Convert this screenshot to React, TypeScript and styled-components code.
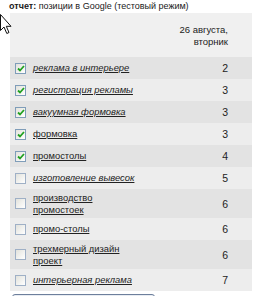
import React from "react";
import styled, { createGlobalStyle } from "styled-components";

const GlobalStyle = createGlobalStyle`
  html, body {
    margin: 0;
    padding: 0;
    background: #ffffff;
  }
  body {
    font-family: "Liberation Sans", Arial, sans-serif;
    font-size: 10px;
    color: #222222;
  }
`;

const Page = styled.div`
  position: relative;
  width: 261px;
  height: 296px;
  overflow: hidden;
  background: #ffffff;
`;

const Title = styled.div`
  height: 13px;
  line-height: 13px;
  padding-left: 9px;
  font-size: 9px;
  color: #1a1a1a;
  white-space: nowrap;

  b {
    font-weight: bold;
  }
`;

const Panel = styled.div`
  margin-left: 10px;
  width: 242px;
  background: #f0f0f0;
`;

const HeadCell = styled.div`
  padding: 11px 24px 9px 0;
  text-align: right;
  line-height: 12px;
  height: 24px;
  font-size: 9.5px;
`;

const Row = styled.div<{ dark: boolean }>`
  display: grid;
  grid-template-columns: 23px 106px 1fr;
  align-items: center;
  min-height: 22px;
  padding: 2.5px 0;
  box-sizing: border-box;
  background: ${(p) => (p.dark ? "#e3e3e3" : "#ededed")};
`;

const Box = styled.span<{ checked: boolean }>`
  display: flex;
  align-items: center;
  justify-content: center;
  width: 9px;
  height: 9px;
  margin-left: 5px;
  border: 1px solid ${(p) => (p.checked ? "#7f9db9" : "#9fb0c6")};
  background: linear-gradient(135deg, #e2e2dc 0%, #ffffff 100%);
`;

const LinkText = styled.a<{ visited: boolean }>`
  font-size: 9.4px;
  line-height: 12px;
  color: #222222;
  text-decoration: underline;
  font-style: ${(p) => (p.visited ? "italic" : "normal")};
  cursor: pointer;
`;

const Num = styled.span`
  text-align: right;
  padding-right: 24px;
  font-size: 10.5px;
`;

const Button = styled.div`
  margin: 3px 0 0 12px;
  width: 141px;
  height: 20px;
  border: 1px solid #6d7f9c;
  border-radius: 3px;
  background: #e8ecf2;
`;

const Cursor = styled.svg`
  position: absolute;
  left: -1px;
  top: 14px;
`;

type Item = { name: string; pos: number; checked: boolean; visited: boolean };

const items: Item[] = [
  { name: "реклама в интерьере", pos: 2, checked: true, visited: true },
  { name: "регистрация рекламы", pos: 3, checked: true, visited: true },
  { name: "вакуумная формовка", pos: 3, checked: true, visited: true },
  { name: "формовка", pos: 3, checked: true, visited: false },
  { name: "промостолы", pos: 4, checked: true, visited: false },
  { name: "изготовление вывесок", pos: 5, checked: false, visited: true },
  { name: "производство промостоек", pos: 6, checked: false, visited: false },
  { name: "промо-столы", pos: 6, checked: false, visited: false },
  { name: "трехмерный дизайн проект", pos: 6, checked: false, visited: false },
  { name: "интерьерная реклама", pos: 7, checked: false, visited: true },
];

const Check = () => (
  <svg width="8" height="7" viewBox="0 0 8 7">
    <path d="M1 3.5 L3 5.5 L7 1" fill="none" stroke="#21a121" strokeWidth="1.8" />
  </svg>
);

const App = () => (
  <Page>
    <GlobalStyle />
    <Title>
      <b>отчет:</b> позиции в Google (тестовый режим)
    </Title>
    <Panel>
      <HeadCell>
        26 августа,
        <br />
        вторник
      </HeadCell>
      {items.map((it, i) => (
        <Row key={it.name} dark={i % 2 === 0}>
          <Box checked={it.checked}>{it.checked && <Check />}</Box>
          <LinkText visited={it.visited}>{it.name}</LinkText>
          <Num>{it.pos}</Num>
        </Row>
      ))}
    </Panel>
    <Button />
    <Cursor width="13" height="21" viewBox="0 0 13 21">
      <path
        d="M1.5 0.5 L1.5 16.5 L5 13 L7.8 19.5 L10 18.5 L7.3 12.3 L12 12.3 Z"
        fill="#ffffff"
        stroke="#111111"
        strokeWidth="1"
      />
    </Cursor>
  </Page>
);

export default App;
